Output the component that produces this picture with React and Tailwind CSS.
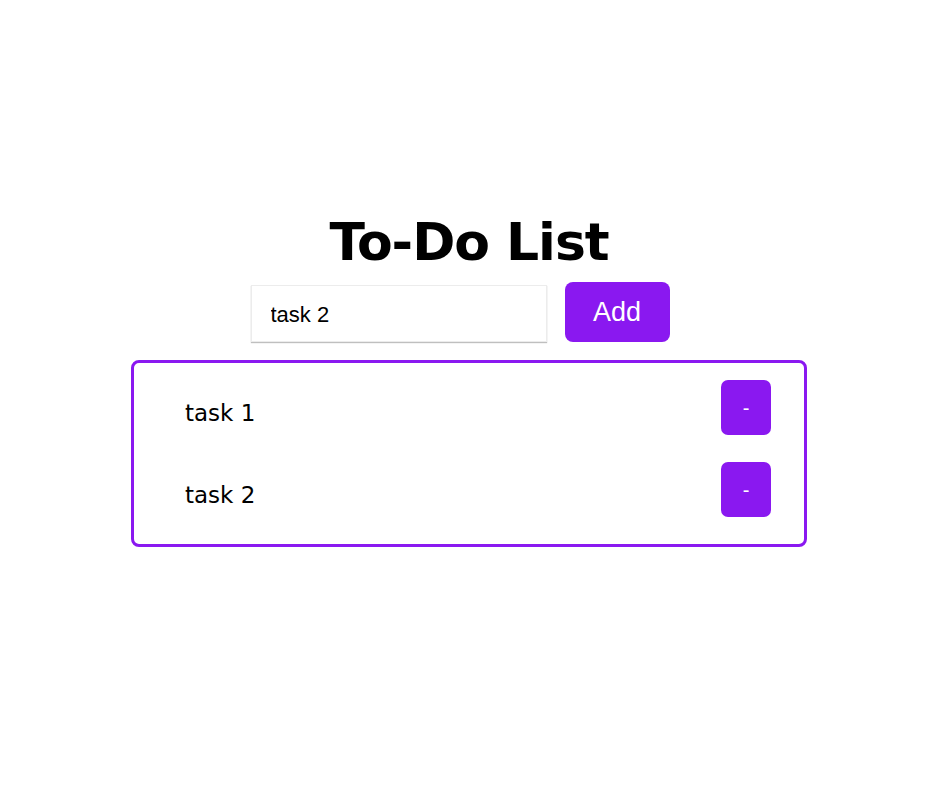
import { useState } from 'react';

export default function App() {
  const [tasks, setTasks] = useState(['task 1', 'task 2']);
  const [text, setText] = useState('task 2');

  const addTask = () => {
    if (!text.trim()) return;
    setTasks([...tasks, text]);
    setText('');
  };

  const removeTask = (index) => {
    setTasks(tasks.filter((_, i) => i !== index));
  };

  return (
    <div className="min-h-[788px] w-full bg-white flex flex-col items-center pt-[210px]">
      <h1 className="text-[52px] leading-[64px] font-bold text-black tracking-[-0.02em] mr-[2px] font-['DejaVu_Sans',sans-serif]">
        To-Do List
      </h1>

      <div className="flex items-end gap-[18px] mt-[8px] mr-[20px]">
        <input
          value={text}
          onChange={(e) => setText(e.target.value)}
          className="w-[296px] h-[57px] border border-[#ececec] shadow-[0_1px_1px_rgba(0,0,0,0.25)] pl-[19px] pr-[10px] pt-[2px] text-[22px] text-black outline-none font-['Liberation_Sans',sans-serif]"
        />
        <button
          onClick={addTask}
          className="w-[105px] h-[60px] rounded-[8px] bg-[#8a18f0] text-white text-[27px] font-['Liberation_Sans',sans-serif]"
        >
          Add
        </button>
      </div>

      <ul className="w-[676px] mt-[18px] mr-[2px] border-[3px] border-[#8a18f0] rounded-[8px] pt-[17px] pb-[27px] flex flex-col gap-[27px]">
        {tasks.map((task, i) => (
          <li key={i} className="flex items-center justify-between pl-[51px] pr-[33px]">
            <span className="text-[23px] text-black pt-[11px] font-['DejaVu_Sans',sans-serif]">{task}</span>
            <button
              onClick={() => removeTask(i)}
              className="w-[50px] h-[55px] rounded-[7px] bg-[#8a18f0] text-white text-[20px] font-['Liberation_Sans',sans-serif]"
            >
              -
            </button>
          </li>
        ))}
      </ul>
    </div>
  );
}
